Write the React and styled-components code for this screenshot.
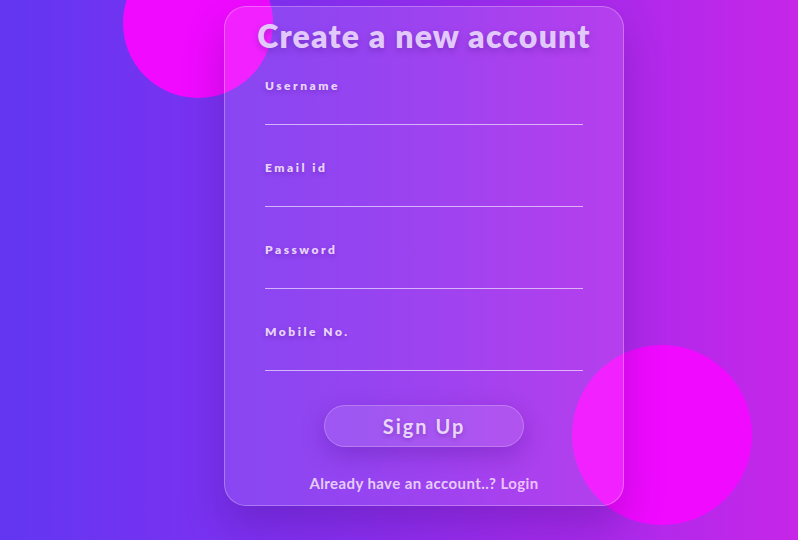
import styled, { createGlobalStyle } from 'styled-components';

const GlobalStyle = createGlobalStyle`
  body {
    margin: 0;
    font-family: Lato, "Liberation Sans", sans-serif;
  }
`;

const fields = ['Username', 'Email id', 'Password', 'Mobile No.'];

const App = () => {
  return (
    <Page>
      <GlobalStyle />
      <Circle size={150} top={-52} left={123} />
      <Circle size={180} top={345} left={572} />
      <Card>
        <Title>Create a new account</Title>
        {fields.map((label) => (
          <Field key={label}>
            <Label>{label}</Label>
            <Input type={label === 'Password' ? 'password' : 'text'} />
          </Field>
        ))}
        <Button>Sign Up</Button>
        <Footer>
          Already have an account..? <LoginLink>Login</LoginLink>
        </Footer>
      </Card>
    </Page>
  );
};

export default App;

const Page = styled.div`
  position: relative;
  width: 798px;
  height: 540px;
  overflow: hidden;
  display: flex;
  align-items: flex-start;
  padding: 6px 0 0 224px;
  box-sizing: border-box;
  background: linear-gradient(to right, #6236f2 0%, #8a2ff0 45%, #c626e8 100%);
`;

const Circle = styled.div`
  position: absolute;
  width: ${({ size }) => size}px;
  height: ${({ size }) => size}px;
  top: ${({ top }) => top}px;
  left: ${({ left }) => left}px;
  border-radius: 50%;
  background: #f00aff;
`;

const Card = styled.div`
  position: relative;
  z-index: 1;
  width: 400px;
  height: 500px;
  box-sizing: border-box;
  padding: 9px 40px 0 40px;
  display: flex;
  flex-direction: column;
  border-radius: 22px;
  background: rgba(255, 255, 255, 0.1);
  border: 1px solid rgba(255, 255, 255, 0.28);
  box-shadow: 0 20px 40px rgba(60, 10, 120, 0.28);
`;

const Title = styled.h1`
  flex-shrink: 0;
  margin: 0 -40px 22px -40px;
  white-space: nowrap;
  font-size: 32px;
  line-height: 40px;
  font-weight: 800;
  letter-spacing: 1.2px;
  text-align: center;
  color: #e2c9fb;
  text-shadow: 0 3px 6px rgba(80, 20, 140, 0.35);
`;

const Field = styled.div`
  flex-shrink: 0;
  display: flex;
  flex-direction: column;
  margin-bottom: 35px;
`;

const Label = styled.label`
  font-size: 12px;
  line-height: 16px;
  font-weight: 800;
  letter-spacing: 2.5px;
  color: #e8d3fb;
  text-shadow: 0 2px 4px rgba(80, 20, 140, 0.35);
`;

const Input = styled.input`
  height: 30px;
  padding: 0;
  border: none;
  border-bottom: 1px solid rgba(255, 255, 255, 0.6);
  background: transparent;
  outline: none;
  color: #fff;
  font-family: inherit;
  font-size: 15px;
`;

const Button = styled.button`
  flex-shrink: 0;
  align-self: center;
  box-sizing: border-box;
  width: 200px;
  height: 42px;
  margin-top: -1px;
  padding: 0;
  border-radius: 21px;
  border: 1px solid rgba(255, 255, 255, 0.22);
  background: rgba(255, 255, 255, 0.1);
  box-shadow: 0 8px 24px rgba(70, 10, 140, 0.3);
  color: #ead6fb;
  font-family: inherit;
  font-size: 20px;
  font-weight: 700;
  letter-spacing: 2px;
  text-shadow: 0 2px 4px rgba(80, 20, 140, 0.35);
  cursor: pointer;
`;

const Footer = styled.p`
  flex-shrink: 0;
  margin: 26px 0 0 0;
  text-align: center;
  font-size: 15px;
  line-height: 20px;
  font-weight: 700;
  letter-spacing: 0.4px;
  color: #e4cdf9;
`;

const LoginLink = styled.a`
  color: #ecc0fb;
  cursor: pointer;
`;
